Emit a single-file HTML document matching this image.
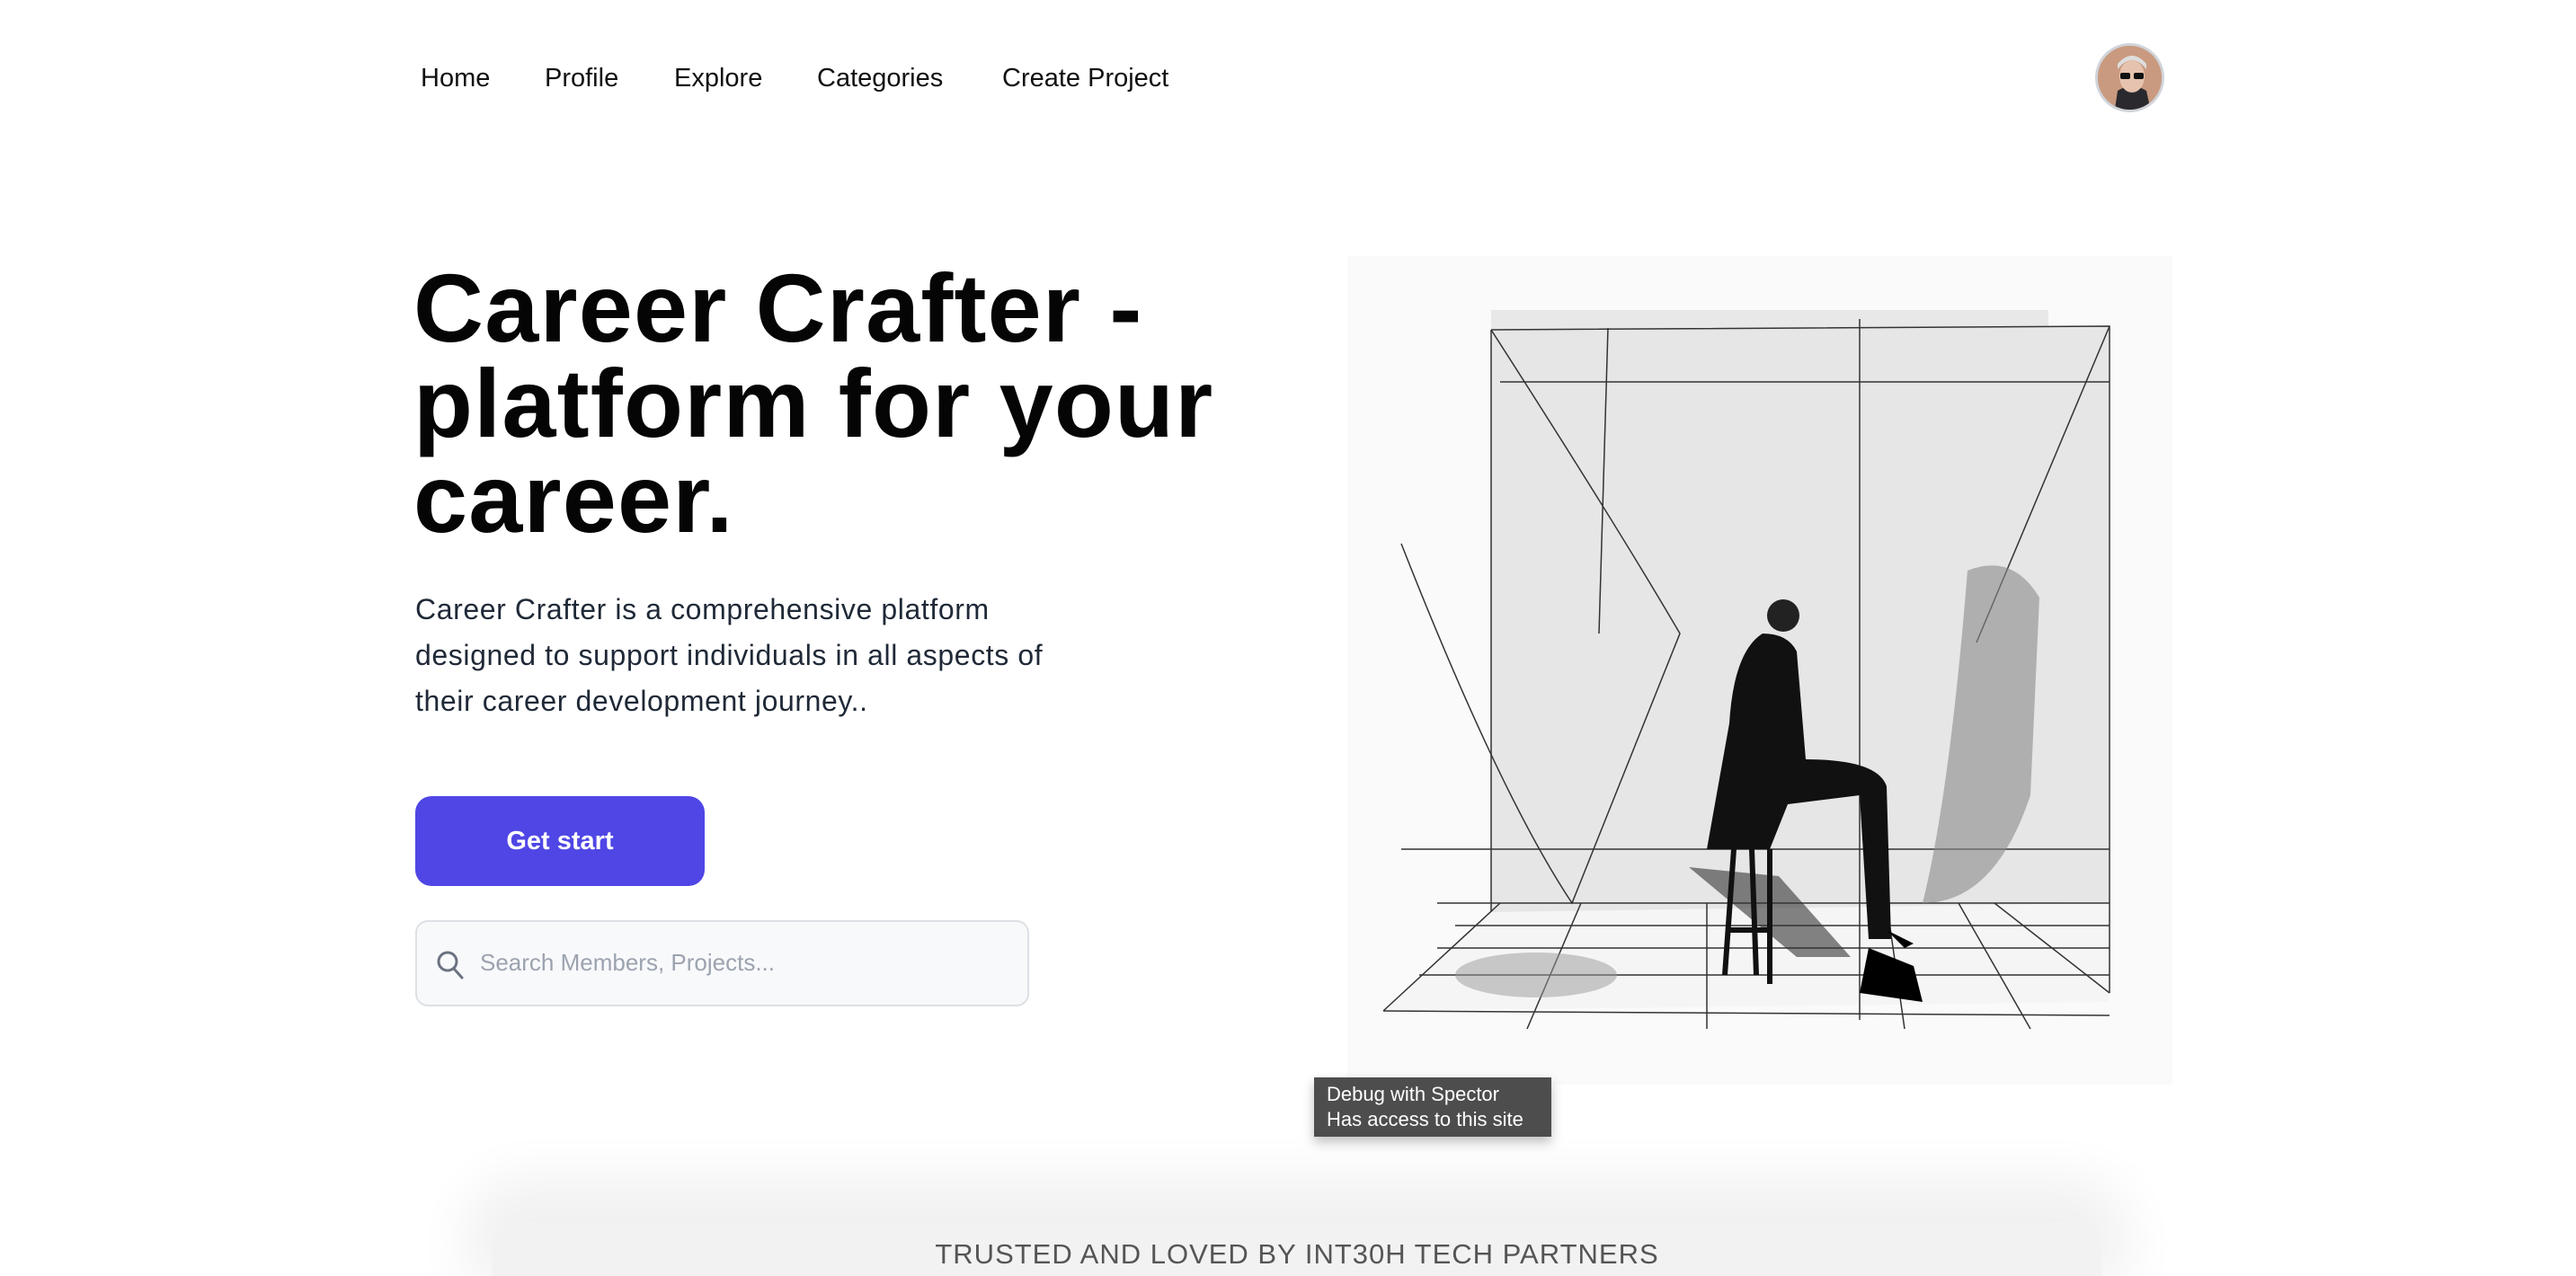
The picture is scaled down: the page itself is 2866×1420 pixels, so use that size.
<!DOCTYPE html>
<html><head><meta charset="utf-8"><style>
*{margin:0;padding:0;box-sizing:border-box}
html,body{width:2866px;height:1390px;overflow:hidden;background:#fff;font-family:"Liberation Sans",Arial,sans-serif;color:#111}
.nav a{position:absolute;top:71px;font-size:29px;color:#111;text-decoration:none}
.av{position:absolute;left:2331px;top:48px;width:77px;height:77px;border-radius:50%;border:3px solid #d0d4da;background:#c99a80;overflow:hidden}
h1{position:absolute;left:460px;top:290px;font-size:108px;line-height:106px;font-weight:700;letter-spacing:1.2px;color:#050505;white-space:nowrap}
p.d{position:absolute;left:462px;top:653px;font-size:32px;line-height:51px;color:#1f2937;white-space:nowrap;letter-spacing:0.6px}
.btn{position:absolute;left:462px;top:886px;width:322px;height:100px;border-radius:18px;background:#4f46e5;color:#fff;font-size:29px;font-weight:700;text-align:center;line-height:100px}
.srch{position:absolute;left:462px;top:1024px;width:683px;height:96px;border-radius:14px;border:2px solid #dde0e5;background:#f8f9fb}
.srch span{position:absolute;left:70px;top:30px;font-size:26px;color:#9ca3af}
.tip{position:absolute;left:1462px;top:1199px;width:264px;height:66px;background:#4d4d4d;color:#fff;font-size:22px;line-height:28px;padding:5px 14px;box-shadow:0 6px 12px rgba(0,0,0,.25)}
.band{position:absolute;left:548px;top:1360px;width:1790px;height:60px;background:#f2f2f3;box-shadow:0 -20px 60px 30px rgba(0,0,0,.06);border-radius:30px 30px 0 0}
.band span{position:absolute;left:0;right:0;top:18px;text-align:center;font-size:31px;color:#555;letter-spacing:1px}
</style></head><body>
<div class="nav"><a style="left:468px">Home</a><a style="left:606px">Profile</a><a style="left:750px">Explore</a><a style="left:909px">Categories</a><a style="left:1115px">Create Project</a></div>
<div class="av"><svg width="77" height="77" viewBox="0 0 77 77"><rect width="77" height="77" fill="#c99a80"/><path d="M18 77 L22 50 Q38 40 54 50 L60 77Z" fill="#2a2a2e"/><ellipse cx="38" cy="34" rx="14" ry="18" fill="#e5c3ae"/><path d="M22 26 Q38 6 54 26 L54 20 Q38 2 22 20Z" fill="#ddd"/><rect x="25" y="30" width="11" height="7" rx="2" fill="#111"/><rect x="40" y="30" width="11" height="7" rx="2" fill="#111"/></svg></div>
<h1>Career Crafter -<br>platform for your<br>career.</h1>
<p class="d">Career Crafter is a comprehensive platform<br>designed to support individuals in all aspects of<br>their career development journey..</p>
<div class="btn">Get start</div>
<div class="srch"><svg style="position:absolute;left:20px;top:30px" width="34" height="36" viewBox="0 0 34 36"><circle cx="14" cy="14" r="10" fill="none" stroke="#6b7280" stroke-width="3"/><path d="M21 22 L30 32" stroke="#6b7280" stroke-width="3" stroke-linecap="round"/></svg><span>Search Members, Projects...</span></div>
<svg style="position:absolute;left:1499px;top:285px" width="918" height="922" viewBox="0 0 918 922">
<rect width="918" height="922" fill="#fafafa"/>
<rect x="160" y="60" width="620" height="70" fill="#e8e8e8"/>
<polygon points="160,82 848,78 848,820 160,730" fill="#e6e6e6"/>
<polygon points="160,730 848,720 848,830 40,840" fill="#f5f5f5"/>
<g stroke="#333" stroke-width="1.5" fill="none">
<path d="M160 82 L848 78 L848 820"/><path d="M160 82 L160 730"/><path d="M170 140 L848 140"/>
<path d="M160 82 Q300 300 370 420 L250 720 Q170 600 60 320"/><path d="M290 80 L280 420"/><path d="M570 70 L570 850"/>
<path d="M60 660 L848 660"/><path d="M40 840 L848 845"/><path d="M40 840 L170 720"/><path d="M848 720 L100 720"/>
<path d="M848 78 L700 430"/><path d="M720 720 L848 820"/><path d="M200 860 L260 720"/><path d="M400 860 L400 720"/><path d="M620 860 L600 720"/><path d="M760 860 L680 720"/>
<path d="M80 800 L848 800"/><path d="M100 770 L848 770"/><path d="M120 745 L848 745"/>
</g>
<path d="M690 350 Q740 330 770 380 L760 600 Q720 720 640 720 Q670 600 690 350Z" fill="#8a8a8a" opacity=".6"/>
<ellipse cx="210" cy="800" rx="90" ry="25" fill="#999" opacity=".5"/>
<path d="M380 680 L500 780 L560 780 L480 690Z" fill="#333" opacity=".6"/>
<circle cx="485" cy="400" r="18" fill="#222"/>
<path d="M462 420 Q430 440 425 520 L400 660 L470 660 L490 610 L570 600 L580 760 L605 760 L600 590 Q590 560 510 560 L500 440 Q490 420 462 420Z" fill="#111"/>
<path d="M580 770 L630 790 L640 830 L570 820Z" fill="#000"/>
<path d="M600 750 L630 765 L620 770Z" fill="#000"/>
<g stroke="#111" stroke-width="6" fill="none"><path d="M430 660 L420 800"/><path d="M470 660 L470 810"/><path d="M450 660 L455 800"/><path d="M425 750 L470 750"/></g>
</svg>
<div class="tip">Debug with Spector<br>Has access to this site</div>
<div class="band"><span>TRUSTED AND LOVED BY INT30H TECH PARTNERS</span></div>
</body></html>
